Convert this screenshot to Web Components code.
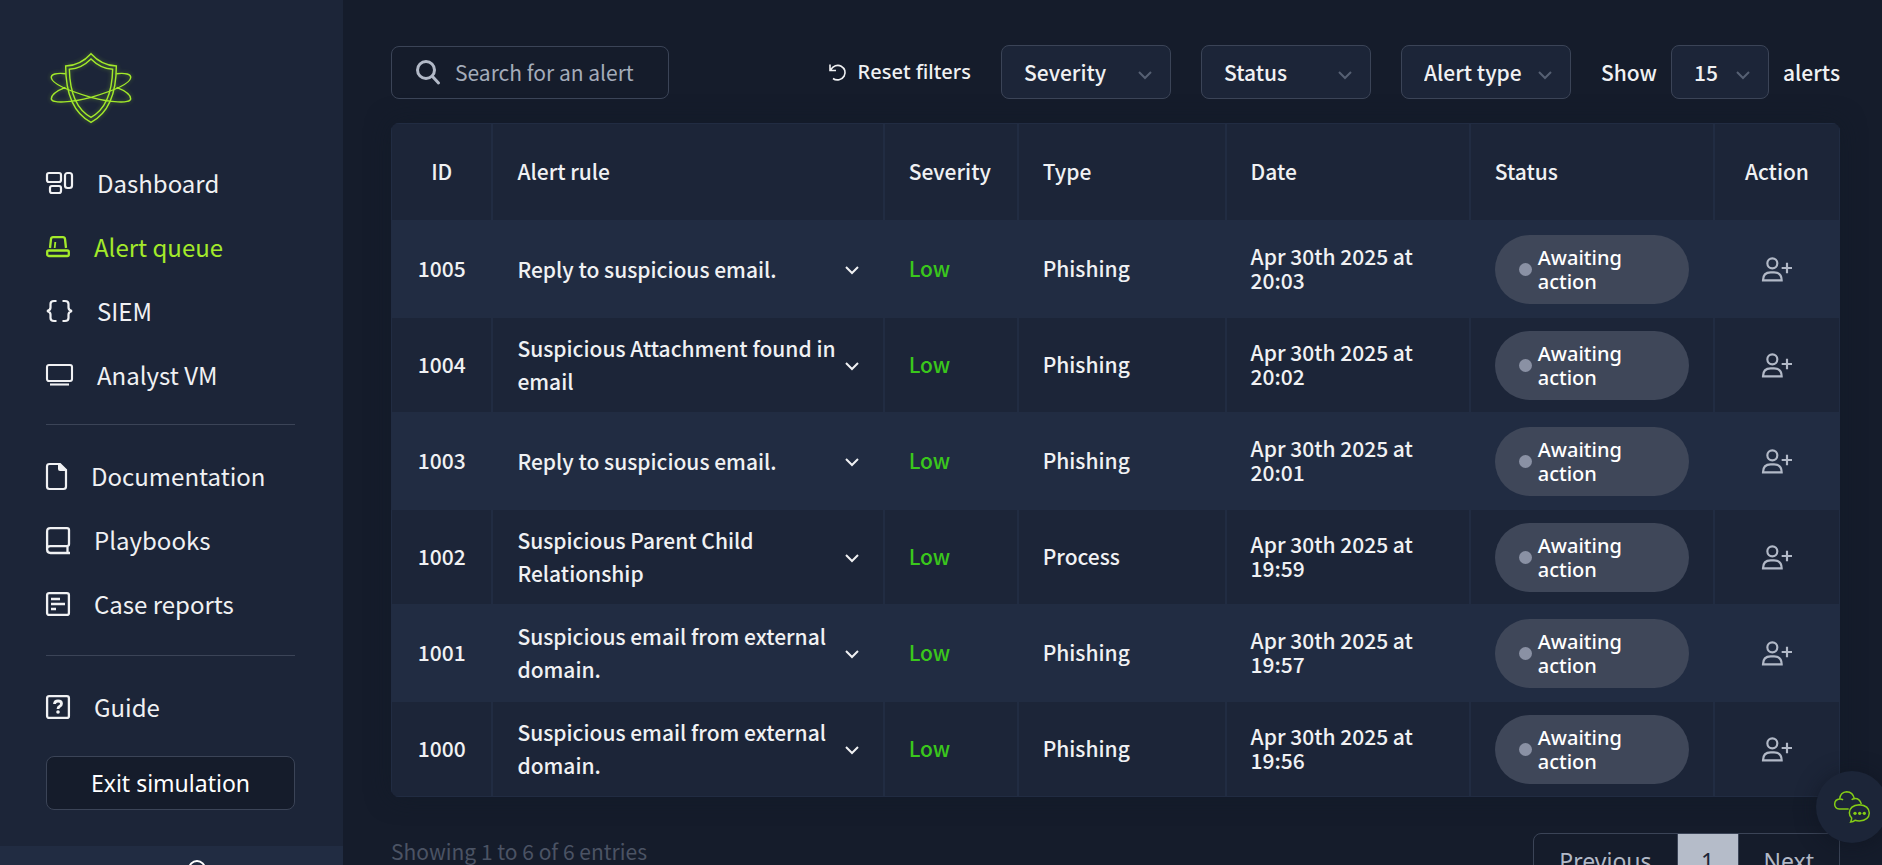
<!DOCTYPE html>
<html lang="en">
<head>
<meta charset="utf-8">
<title>Alert queue</title>
<style>
  html, body { height: 100%; }
  body {
    margin: 0;
    overflow: hidden;
    background: #151c2b;
    color: #f0f1f3;
    font: 400 21px/24px "Noto Sans CJK SC", "Open Sans", sans-serif;
    --sans-alt: "Noto Sans", "Open Sans", sans-serif;
    --panel: #1c2538;
    --stripe: #212c42;
    --line: #3b4457;
    --muted: #b2b9c7;
    --accent: #a3ea2a;
  }
</style>
</head>
<body>
<app-shell>
  <side-nav slot="nav">
    <nav-item icon="dashboard">Dashboard</nav-item>
    <nav-item icon="siren" active>Alert queue</nav-item>
    <nav-item icon="braces">SIEM</nav-item>
    <nav-item icon="monitor">Analyst VM</nav-item>
    <nav-item slot="docs" icon="file">Documentation</nav-item>
    <nav-item slot="docs" icon="book">Playbooks</nav-item>
    <nav-item slot="docs" icon="report">Case reports</nav-item>
    <nav-item slot="help" icon="help">Guide</nav-item>
  </side-nav>
  <alert-toolbar></alert-toolbar>
  <alert-table></alert-table>
  <table-footer>Showing 1 to 6 of 6 entries</table-footer>
</app-shell>
<chat-button></chat-button>

<script>
const define = (name, html, setup) => {
  const template = document.createElement('template');
  template.innerHTML = html;
  customElements.define(name, class extends HTMLElement {
    constructor() {
      super();
      this.attachShadow({ mode: 'open' }).append(template.content.cloneNode(true));
    }
    connectedCallback() {
      if (setup) setup(this, this.shadowRoot);
    }
  });
};

/* name: [width, height, viewBox, markup] */
const ICONS = {
  dashboard: [27, 22, '0 0 27 22', '<g fill="none" stroke="currentColor" stroke-width="2.200"><rect x="1" y="1" width="14" height="9" rx="2"/><rect x="19" y="1" width="7" height="15" rx="2.500"/><rect x="4" y="14" width="11" height="7" rx="2"/></g>'],
  siren: [24, 22, '0 0 24 22', '<g fill="none" stroke="currentColor" stroke-width="2.300" stroke-linejoin="round"><rect x="1.200" y="14.500" width="21.600" height="5.500" rx="1.500"/><path d="M4 12 5 3Q5.300 1.200 7 1.200h10q1.700 0 2 1.800l1 9"/><path d="M8.700 12 9.300 6" stroke-width="1.800"/></g>'],
  braces: [27, 22, '0 0 27 22', '<g fill="none" stroke="currentColor" stroke-width="2.200"><path d="M10.500 1H8Q4.500 1 4.500 4v3.500Q4.500 10.200 1 11q3.500.800 3.500 3.500V18q0 3 3.500 3h2.500M16.500 1H19q3.500 0 3.500 3v3.500q0 2.700 3.500 3.500-3.500.800-3.500 3.500V18q0 3-3.500 3h-2.500"/></g>'],
  monitor: [27, 22, '0 0 27 22', '<g fill="none" stroke="currentColor" stroke-width="2.100"><rect x="1" y="1" width="25" height="16" rx="2"/><path d="M4 20.500h19"/></g>'],
  file: [21, 27, '0 0 21 27', '<path d="M14 1H3.500Q1 1 1 3.500v20Q1 26 3.500 26h14q2.500 0 2.500-2.500V7z" fill="none" stroke="currentColor" stroke-width="2.200"/><path d="M12 1h2l6.500 6v1H14q-2 0-2-2z" fill="currentColor"/>'],
  book: [24, 27, '0 0 24 27', '<path d="M1.100 23V4.500Q1 1 4.500 1.100H21q2 0 2 2v14q0 2-2 2H4.500Q1 19 1.100 22.500T4.500 26H24M21.500 19v7" fill="none" stroke="currentColor" stroke-width="2.300"/>'],
  report: [24, 24, '0 0 24 24', '<g fill="none" stroke="currentColor" stroke-width="2.300"><rect x="1.100" y="1.100" width="21.800" height="21.800" rx="2"/><path d="M5 7h9M5 12h14M5 17h5"/></g>'],
  help: [24, 24, '0 0 24 24', '<g fill="none" stroke="currentColor" stroke-width="2.300"><rect x="1.100" y="1.100" width="21.800" height="21.800" rx="2"/><path d="M8.500 9Q8.700 6 12 6q3.500 0 3.500 2.800 0 1.700-2 2.700Q12 12.300 12 14" stroke-width="2.800"/></g><circle cx="12" cy="17" r="1.800" fill="currentColor"/>'],
  search: [26, 26, '0 0 26 26', '<g fill="none" stroke="currentColor" stroke-width="3" stroke-linecap="round"><circle cx="11" cy="11" r="8.500"/><path d="m17.500 17.500 6 6.500"/></g>'],
  reset: [17, 17, '0 0 17 17', '<path d="M1 .500v6h6M1.500 6.200C4 1.800 8.500.200 12.200 2.200 16 4.300 17 8.500 15.200 12 13 16 7.500 17 4 14.500" fill="none" stroke="currentColor" stroke-width="1.600"/>'],
  chevron: [14, 9, '0 0 14 9', '<path d="m1 1 6 6 6-6" fill="none" stroke="currentColor" stroke-width="2"/>'],
  assign: [30, 25, '0 0 90 75', '<g fill="none" stroke="currentColor" stroke-width="6.500"><circle cx="31" cy="19" r="15"/><path d="M3 70Q3 46 26 46h10q23 0 23 24zM59 33h31M75 17v32"/></g>'],
  user: [26, 30, '0 0 26 30', '<g fill="none" stroke="currentColor" stroke-width="2"><circle cx="13" cy="9" r="8"/><path d="M1 29q0-9 12-9t12 9"/></g>'],
  chat: [36, 32, '0 0 108 96', '<g fill="none" stroke="currentColor" stroke-width="4.500"><path d="M44 54H16Q2 53 2 39 3 25 17 24 19 3 38 2q19 1 23 21 15-2 21 16M17 24q6-1 10 3M61 23q-5 0-8 3"/><path d="M50 93q3-6 3-12Q46 75 46 65 47 43 76 41q29 2 30 25-1 22-30 24-7 0-13-2-5 4-13 5z"/></g><g fill="currentColor"><circle cx="63" cy="67" r="5"/><circle cx="77" cy="67" r="5"/><circle cx="91" cy="67" r="5"/></g>'],
  logo: [90, 75, '138 150 270 225', '<g fill="none" stroke="currentColor" stroke-width="4.300"><path d="M273 161C252 184 225 197 197 198 197 245 203 330 273 367 343 330 349 245 349 198 321 197 294 184 273 161z"/><path d="M273 177C254 196 232 207 208 208 209 250 217 322 273 352 329 322 337 250 338 208 314 207 292 196 273 177z"/><path d="M197 221C170 218 152 222 154 234 157 250 205 272 273 292 330 307 392 312 392 296 392 282 370 270 350 262M349 221C376 218 394 222 392 234 389 250 341 272 273 292 216 307 154 312 154 296 154 282 176 270 196 262"/></g>'],
};

define('ui-icon', `
  <style>:host { display: block; flex: none; } svg { display: block; overflow: visible; }</style>
`, (el, root) => {
  const [w, h, box, body] = ICONS[el.getAttribute('name')];
  root.innerHTML += `<svg width="${w}" height="${h}" viewBox="${box}" aria-hidden="true">${body}</svg>`;
});

define('app-shell', `
  <style>
    :host { display: grid; grid-template-columns: 343px 1fr; height: 100vh; }
    main { overflow: hidden; min-width: 0; padding: 45px 42px 0 48px; }
    slot[name=nav] { display: contents; }
  </style>
  <slot name="nav"></slot>
  <main><slot></slot></main>
`);

define('side-nav', `
  <style>
    :host { display: flex; flex-direction: column; overflow: hidden; background: var(--panel); }
    .logo { color: var(--accent); padding: 50px 46px 44px; filter: drop-shadow(0 0 2px #a3ea2a66); }
    nav { display: flex; flex-direction: column; padding: 0 48px 0 46px; }
    .group { display: flex; flex-direction: column; gap: 36px; }
    .docs { padding-bottom: 2px; }
    hr { box-sizing: border-box; width: 100%; height: 1px; margin: 35px 0 37px; border: 0; background: var(--line); }
    button {
      height: 54px; margin-top: 35px; padding: 0;
      border: 1px solid var(--line); border-radius: 8px;
      background: #151c2b; color: #fff; font: 400 23px/24px var(--sans-alt);
    }
    footer { flex: none; display: flex; justify-content: center; margin-top: 36px; padding: 14px 0 24px; background: var(--stripe); color: #fff; }
    footer ui-icon { margin-left: 50px; }
  </style>
  <div class="logo"><ui-icon name="logo"></ui-icon></div>
  <nav>
    <div class="group"><slot></slot></div>
    <hr>
    <div class="group docs"><slot name="docs"></slot></div>
    <hr>
    <div class="group"><slot name="help"></slot></div>
    <button type="button">Exit simulation</button>
  </nav>
  <footer><ui-icon name="user"></ui-icon></footer>
`);

define('nav-item', `
  <style>
    :host { display: block; font-size: 24px; line-height: 28px; }
    a { display: flex; align-items: center; gap: 24px; height: 28px; color: inherit; text-decoration: none; }
    :host([active]) a { color: var(--accent); }
  </style>
  <a href="#"><slot></slot></a>
`, (el, root) => {
  const icon = document.createElement('ui-icon');
  icon.setAttribute('name', el.getAttribute('icon'));
  root.querySelector('a').prepend(icon);
});

define('filter-select', `
  <style>
    :host { display: grid; width: 170px; align-items: center; }
    :host([compact]) { width: 98px; }
    select, ui-icon { grid-area: 1 / 1; }
    select {
      appearance: none; box-sizing: border-box; width: 100%; height: 54px; padding: 0 22px;
      border: 1px solid var(--line); border-radius: 8px; background: var(--panel);
      color: inherit; font: inherit; font-weight: 500; line-height: 36px;
    }
    ui-icon { justify-self: end; margin-right: 19px; margin-top: 6px; color: #566073; pointer-events: none; }
  </style>
  <select></select><ui-icon name="chevron"></ui-icon>
`, (el, root) => {
  const select = root.querySelector('select');
  select.setAttribute('aria-label', el.getAttribute('label'));
  select.append(new Option(el.getAttribute('value')));
});

define('alert-toolbar', `
  <style>
    :host { display: flex; align-items: center; gap: 30px; margin-bottom: 24px; font-weight: 500; }
    .search {
      display: flex; align-items: center; gap: 14px; box-sizing: border-box; width: 278px; height: 53px;
      padding: 0 23px; border: 1px solid var(--line); border-radius: 8px; color: var(--muted); margin-right: auto;
    }
    input { flex: 1; min-width: 0; padding: 0; border: 0; outline: 0; background: none; color: inherit; font: inherit; font-weight: 400; }
    input::placeholder { color: #a4acba; opacity: 1; }
    button { display: flex; align-items: center; gap: 12px; padding: 0; border: 0; background: none; color: inherit; font: 500 20px/24px var(--sans-alt); }
    .show { display: flex; align-items: center; gap: 14px; }
  </style>
  <label class="search"><ui-icon name="search"></ui-icon><input type="text" placeholder="Search for an alert" aria-label="Search for an alert"></label>
  <button type="button"><ui-icon name="reset"></ui-icon>Reset filters</button>
  <filter-select label="Severity" value="Severity"></filter-select>
  <filter-select label="Status" value="Status"></filter-select>
  <filter-select label="Alert type" value="Alert type"></filter-select>
  <div class="show"><span>Show</span><filter-select compact label="Alerts per page" value="15"></filter-select><span>alerts</span></div>
`);

define('status-pill', `
  <style>
    :host {
      display: flex; align-items: center; gap: 6px; box-sizing: border-box; padding: 11px 24px 10px;
      border-radius: 35px; background: #3f4759; color: #fff; font: 500 20px/24px var(--sans-alt);
    }
    i { flex: none; width: 13px; height: 13px; border-radius: 50%; background: #8a91a4; }
    span { width: 100px; }
  </style>
  <i></i><span><slot></slot></span>
`);

define('alert-table', `
  <style>
    :host { display: block; border-radius: 8px; overflow: hidden; box-shadow: 0 0 24px #121a2699; }
    table { width: 100%; border-collapse: separate; border-spacing: 0; table-layout: fixed; background: var(--panel); font-weight: 500; }
    th, td { box-sizing: border-box; height: 96px; padding: 0 24px 2px; border: 1px solid #212c42; text-align: left; font-weight: 500; }
    th { height: 98px; }
    tbody tr:nth-child(odd) { background: var(--stripe); }
    .id, .action { padding: 0 0 2px; text-align: center; }
    .full { padding: 0 24px; }
    td.severity { color: #3ac71c; }
    .rule { display: flex; align-items: center; justify-content: space-between; width: 100%; padding: 0; border: 0; background: none; color: inherit; font: inherit; line-height: 33px; text-align: left; }
    .rule ui-icon { margin-top: 2px; }
    .assign { padding: 0; border: 0; background: none; color: var(--muted); vertical-align: middle; }
  </style>
  <table>
    <colgroup><col style="width:7%"><col style="width:27%"><col style="width:9.250%"><col style="width:14.350%"><col style="width:16.850%"><col style="width:16.850%"><col style="width:8.700%"></colgroup>
    <thead><tr><th class="id">ID</th><th>Alert rule</th><th>Severity</th><th>Type</th><th>Date</th><th>Status</th><th class="action">Action</th></tr></thead>
    <tbody></tbody>
  </table>
`, (el, root) => {
  const alerts = [
    [1005, 'Reply to suspicious email.', 'Phishing', '20:03'],
    [1004, 'Suspicious Attachment found in email', 'Phishing', '20:02'],
    [1003, 'Reply to suspicious email.', 'Phishing', '20:01'],
    [1002, 'Suspicious Parent Child Relationship', 'Process', '19:59'],
    [1001, 'Suspicious email from external domain.', 'Phishing', '19:57'],
    [1000, 'Suspicious email from external domain.', 'Phishing', '19:56'],
  ];
  root.querySelector('tbody').innerHTML = alerts.map(([id, rule, type, time]) => `
    <tr>
      <td class="id">${id}</td>
      <td class="full"><button type="button" class="rule"><span>${rule}</span><ui-icon name="chevron"></ui-icon></button></td>
      <td class="severity">Low</td>
      <td>${type}</td>
      <td>Apr 30th 2025 at ${time}</td>
      <td class="full"><status-pill>Awaiting action</status-pill></td>
      <td class="action"><button type="button" class="assign" aria-label="Assign alert ${id}"><ui-icon name="assign"></ui-icon></button></td>
    </tr>`).join('');
});

define('table-footer', `
  <style>
    :host { display: flex; justify-content: space-between; align-items: flex-start; padding-top: 36px; color: #4b5364; }
    p { margin: 6px 0 0; }
    .pages { display: flex; box-sizing: border-box; border: 1px solid var(--line); border-radius: 8px; overflow: hidden; }
    button { height: 54px; padding: 0 25px; border: 0; background: none; color: var(--muted); font: 400 23px/24px var(--sans-alt); }
    .current { width: 62px; padding: 0; background: #b5bcc9; color: #1d2536; border: solid var(--line); border-width: 0 1px; }
  </style>
  <p><slot></slot></p>
  <div class="pages"><button type="button">Previous</button><button type="button" class="current">1</button><button type="button">Next</button></div>
`);

define('chat-button', `
  <style>
    :host { position: fixed; right: -6px; bottom: 22px; }
    button { display: grid; place-items: center; width: 72px; height: 72px; padding: 0; border: 0; border-radius: 50%; background: var(--panel); color: #84cc16; box-shadow: 0 2px 20px #0f141f99; }
  </style>
  <button type="button" aria-label="Open chat"><ui-icon name="chat"></ui-icon></button>
`);
</script>
</body>
</html>
